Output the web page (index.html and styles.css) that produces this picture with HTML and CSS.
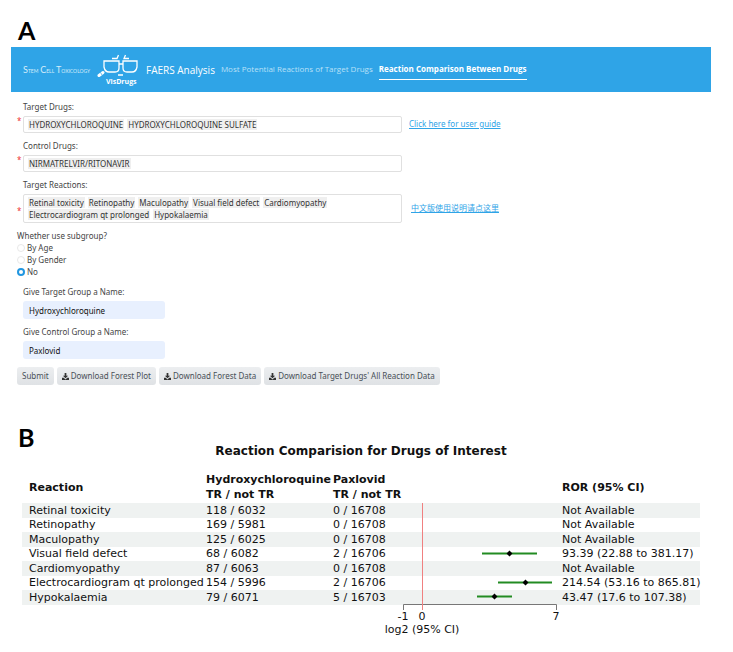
FILE: index.html
```
<!DOCTYPE html>
<html lang="en">
<head>
    <meta charset="UTF-8">
    <meta name="viewport" content="width=device-width, initial-scale=1.0">
    <title>VisDrugs - FAERS Analysis</title>
    <link rel="stylesheet" href="styles.css">
</head>
<body>
    <section class="panel-a">
        <h2 class="panel-label">A</h2>

        <nav class="navbar">
            <span class="lab-name"><b>S</b>tem <b>C</b>ell <b>T</b>oxicology</span>
            <span class="brand">
                <svg class="glasses" width="42" height="24" viewBox="0 0 42 24" fill="none" stroke="#fff" stroke-width="1.3">
                    <path d="M7 7H22V14Q22 18 18 18H12Q8 18 7 13ZM26 7H40V13Q39 18 35 18H30Q26 18 26 14ZM22 10H26"/>
                    <path d="M15 4.500H20L21.500 1M28.500 1L27 4.500H32M21 21H26"/>
                    <path d="M2 21.500L6 18.500" stroke-width="3" stroke-linecap="round"/>
                    <path d="M3.4 18.2L5 21" stroke="#2fa4e7" stroke-width="0.7"/>
                </svg>
                <span class="brand-name">VisDrugs</span>
            </span>
            <span class="app-title">FAERS Analysis</span>
            <a class="tab" href="#reactions">Most Potential Reactions of Target Drugs</a>
            <a class="tab active" href="#comparison">Reaction Comparison Between Drugs</a>
        </nav>

        <form class="query">
            <div class="row">
                <div class="field required">
                    <label for="target">Target Drugs:</label>
                    <div class="tags">
                        <span class="tag">HYDROXYCHLOROQUINE</span>
                        <span class="tag">HYDROXYCHLOROQUINE SULFATE</span>
                        <input id="target" type="text">
                    </div>
                </div>
                <a class="guide" href="#guide">Click here for user guide</a>
            </div>
            <div class="row">
                <div class="field required">
                    <label for="control">Control Drugs:</label>
                    <div class="tags">
                        <span class="tag">NIRMATRELVIR/RITONAVIR</span>
                        <input id="control" type="text">
                    </div>
                </div>
            </div>
            <div class="row">
                <div class="field required">
                    <label for="reactions">Target Reactions:</label>
                    <div class="tags">
                        <span class="tag">Retinal toxicity</span>
                        <span class="tag">Retinopathy</span>
                        <span class="tag">Maculopathy</span>
                        <span class="tag">Visual field defect</span>
                        <span class="tag">Cardiomyopathy</span>
                        <span class="tag">Electrocardiogram qt prolonged</span>
                        <span class="tag">Hypokalaemia</span>
                        <input id="reactions" type="text">
                    </div>
                </div>
                <a class="guide guide-zh" href="#guide-zh" lang="zh-CN">中文版使用说明请点这里</a>
            </div>

            <fieldset class="subgroup">
                <legend>Whether use subgroup?</legend>
                <label><input type="radio" name="subgroup" value="age">By Age</label>
                <label><input type="radio" name="subgroup" value="gender">By Gender</label>
                <label><input type="radio" name="subgroup" value="no" checked>No</label>
            </fieldset>

            <div class="field">
                <label for="target-name">Give Target Group a Name:</label>
                <input class="name-input" id="target-name" type="text" value="Hydroxychloroquine">
            </div>
            <div class="field">
                <label for="control-name">Give Control Group a Name:</label>
                <input class="name-input" id="control-name" type="text" value="Paxlovid">
            </div>

            <div class="buttons">
                <button class="btn" type="button">Submit</button>
                <button class="btn" type="button"><svg class="icon" viewBox="0 0 16 16"><path d="M6 0h4v6H14L8 12 2 6h4zM0 11h4l4 4 4-4h4v5H0z"/></svg>Download Forest Plot</button>
                <button class="btn" type="button"><svg class="icon" viewBox="0 0 16 16"><path d="M6 0h4v6H14L8 12 2 6h4zM0 11h4l4 4 4-4h4v5H0z"/></svg>Download Forest Data</button>
                <button class="btn" type="button"><svg class="icon" viewBox="0 0 16 16"><path d="M6 0h4v6H14L8 12 2 6h4zM0 11h4l4 4 4-4h4v5H0z"/></svg>Download Target Drugs' All Reaction Data</button>
            </div>
        </form>
    </section>

    <section class="panel-b">
        <h2 class="panel-label">B</h2>
        <h3 class="forest-title">Reaction Comparision for Drugs of Interest</h3>

        <div class="forest">
            <table>
                <colgroup>
                    <col class="col-reaction">
                    <col class="col-target">
                    <col class="col-control">
                    <col class="col-plot">
                    <col>
                </colgroup>
                <thead>
                    <tr>
                        <th>Reaction</th>
                        <th>Hydroxychloroquine<br>TR / not TR</th>
                        <th>Paxlovid<br>TR / not TR</th>
                        <th></th>
                        <th>ROR (95% CI)</th>
                    </tr>
                </thead>
                <tbody>
                    <tr><td>Retinal toxicity</td><td>118 / 6032</td><td>0 / 16708</td><td></td><td>Not Available</td></tr>
                    <tr><td>Retinopathy</td><td>169 / 5981</td><td>0 / 16708</td><td></td><td>Not Available</td></tr>
                    <tr><td>Maculopathy</td><td>125 / 6025</td><td>0 / 16708</td><td></td><td>Not Available</td></tr>
                    <tr><td>Visual field defect</td><td>68 / 6082</td><td>2 / 16706</td><td></td><td>93.39 (22.88 to 381.17)</td></tr>
                    <tr><td>Cardiomyopathy</td><td>87 / 6063</td><td>0 / 16708</td><td></td><td>Not Available</td></tr>
                    <tr><td>Electrocardiogram qt prolonged</td><td>154 / 5996</td><td>2 / 16706</td><td></td><td>214.54 (53.16 to 865.81)</td></tr>
                    <tr><td>Hypokalaemia</td><td>79 / 6071</td><td>5 / 16703</td><td></td><td>43.47 (17.6 to 107.38)</td></tr>
                </tbody>
            </table>

            <!-- confidence intervals, drawn over the empty table column -->
            <svg class="plot" width="190" height="136" viewBox="0 0 190 136">
                <path class="axis" d="M28.500 107V101.500H181.500V107"/>
                <path class="zero" d="M47.500 0V107"/>
                <path class="ci" d="M107 50.500H162M123 79.500H177M102 93.500H137"/>
                <path d="M134.500 47.500l3 3-3 3-3-3zM150.500 76.500l3 3-3 3-3-3zM119.500 90.500l3 3-3 3-3-3z"/>
                <text x="28" y="117">-1</text>
                <text x="47" y="117">0</text>
                <text x="181" y="117">7</text>
                <text x="47" y="130">log2 (95% CI)</text>
            </svg>
        </div>
    </section>
</body>
</html>
```
FILE: styles.css
```
body {
    margin: 0;
    padding: 22px 22px 16px 11px;
    background: #fff;
    font-family: "Noto Sans", "Noto Sans CJK SC", sans-serif;
    font-size: 8px;
    line-height: 12px;
    color: #444;
}

.panel-label {
    margin: 0;
    padding-left: 7px;
    font-family: Lato, sans-serif;
    font-size: 25px;
    line-height: 16px;
    font-weight: 700;
    color: #000;
}

/* top bar */
.navbar {
    display: flex;
    align-items: center;
    height: 45px;
    margin-top: 9px;
    padding-left: 12px;
    background: #2fa4e7;
    color: #fff;
    font-family: "Open Sans", sans-serif;
    white-space: nowrap;
}

.lab-name {
    width: 74px;
    font-family: Lato, sans-serif;
    font-size: 7px;
    font-variant: small-caps;
    color: #d5ecfa;
}

.lab-name b {
    font-size: 9px;
    font-weight: 400;
}

.brand {
    display: flex;
    flex-direction: column;
    width: 49px;
}

.brand-name {
    padding-left: 9px;
    font-size: 7px;
    line-height: 8px;
    font-weight: bold;
}

.app-title {
    font-size: 10px;
    font-weight: 500;
}

.tab {
    margin-left: 6px;
    padding: 4px 0;
    border-bottom: 1px solid transparent;
    color: #b9e0f7;
    text-decoration: none;
}

.tab.active {
    border-color: #fff;
    color: #fff;
    font-weight: bold;
}

/* query form */
.query {
    padding: 9px 0 0 6px;
}

.row {
    display: flex;
    align-items: flex-end;
}

.row .field {
    flex: 0 1 379px;
}

.field {
    position: relative;
    margin-bottom: 7px;
    padding-left: 6px;
}

.field label {
    display: block;
    margin-bottom: 3px;
}

.required::before {
    content: "*";
    position: absolute;
    left: 0;
    bottom: 6px;
    color: #e33;
}

.tags {
    display: flex;
    flex-wrap: wrap;
    gap: 1px 3px;
    padding: 2px 4px;
    border: 1px solid #e0e0e0;
    border-radius: 2px;
}

.tag {
    padding: 0 1px;
    background: #efefef;
    color: #333;
    line-height: 11px;
}

.tags input {
    width: 4px;
    height: 11px;
    padding: 0;
    border: 0;
    outline: 0;
}

.guide {
    margin: 0 0 10px 7px;
    color: #2fa4e7;
    text-decoration: underline;
}

.guide-zh {
    margin: 0 0 16px 9px;
}

.subgroup {
    margin: 0 0 8px;
    padding: 0;
    border: 0;
}

.subgroup legend {
    padding: 0;
}

.subgroup label {
    display: flex;
    align-items: center;
    gap: 2px;
}

.subgroup input {
    appearance: none;
    box-sizing: border-box;
    width: 8px;
    height: 8px;
    margin: 0;
    border: 1px solid #e8e8e8;
    border-radius: 50%;
}

.subgroup input:checked {
    border: 2px solid #2196e0;
}

.name-input {
    display: block;
    box-sizing: border-box;
    width: 142px;
    height: 18px;
    padding: 0 6px;
    border: 0;
    border-radius: 3px;
    background: #e8f0fe;
    font: inherit;
    color: #111;
}

.buttons {
    display: flex;
    flex-wrap: wrap;
    gap: 3px;
    padding-top: 1px;
}

.btn {
    height: 18px;
    padding: 0 5px;
    border: 0;
    border-radius: 3px;
    background: linear-gradient(#eceef0, #dfe2e5);
    font: inherit;
    color: #495057;
    white-space: nowrap;
}

.icon {
    width: 7px;
    height: 7px;
    margin-right: 2px;
    vertical-align: -1px;
    fill: #333;
}

/* forest plot */
.panel-b {
    margin-top: 44px;
    font-family: "DejaVu Sans", sans-serif;
    color: #111;
}

.forest-title {
    margin: 0;
    font-size: 12px;
    line-height: 12px;
    text-align: center;
}

.forest {
    position: relative;
    margin: 14px 11px 0 11px;
    padding-bottom: 32px;
}

.forest table {
    width: 100%;
    table-layout: fixed;
    border-collapse: collapse;
    font-size: 11px;
    line-height: 14px;
    white-space: nowrap;
}

.col-reaction {
    width: 184px;
}

.col-target {
    width: 127px;
}

.col-control {
    width: 68px;
}

.col-plot {
    width: 161px;
}

.forest th,
.forest td {
    padding: 0;
    text-align: left;
}

.forest th:first-child,
.forest td:first-child {
    padding-left: 7px;
}

.forest th {
    height: 32px;
    line-height: 15px;
}

.forest tbody tr {
    height: 14px;
}

.forest tbody tr:nth-child(odd) {
    height: 15px;
    background: #eff2f1;
}

.plot {
    position: absolute;
    left: 353px;
    top: 32px;
}

.plot .axis {
    fill: none;
    stroke: #777;
}

.plot .zero {
    stroke: #f08080;
}

.plot .ci {
    stroke: #228b22;
    stroke-width: 2;
}

.plot text {
    font-size: 11px;
    text-anchor: middle;
    fill: #111;
}
```
